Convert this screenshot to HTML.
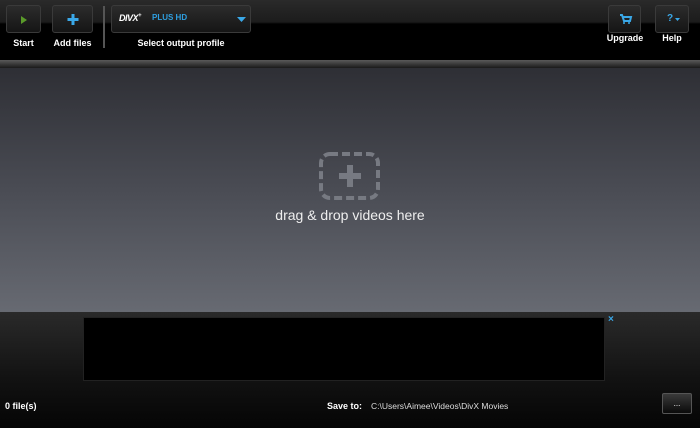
<!DOCTYPE html>
<html><head><style>
*{margin:0;padding:0;box-sizing:border-box}
body{width:700px;height:428px;overflow:hidden;background:#000;font-family:"Liberation Sans",sans-serif;position:relative}
.top{position:absolute;left:0;top:0;width:700px;height:60px;background:linear-gradient(#2a2a2a 0,#1c1c1c 22px,#000 24px,#000 60px)}
.sep{position:absolute;left:0;top:60px;width:700px;height:8px;background:linear-gradient(#5a5a5a,#333 60%,#1a1a1a)}
.main{position:absolute;left:0;top:68px;width:700px;height:244px;background:linear-gradient(#2e2f35,#4a4c54 50%,#676a72)}
.bot{position:absolute;left:0;top:312px;width:700px;height:116px;background:linear-gradient(#2a2a2a,#111 60%,#050505)}
.btn{position:absolute;top:5px;height:28px;border:1px solid #3a3a3a;border-radius:3px;background:linear-gradient(#2c2c2c,#151515)}
.lbl{position:absolute;color:#fff;font-size:9px;font-weight:bold;text-align:center}
</style></head><body>
<div class="top"></div>
<div class="btn" style="left:6px;width:35px"><svg width="35" height="28"><polygon points="14,10 14,18 20,14" fill="#5a9a2a"/></svg></div>
<div class="btn" style="left:52px;width:41px"><svg width="41" height="28"><rect x="18.5" y="8" width="3" height="11" fill="#3aa8e8"/><rect x="14.5" y="12" width="11" height="3" fill="#3aa8e8"/></svg></div>
<div style="position:absolute;left:103px;top:6px;width:2px;height:42px;background:#555"></div>
<div class="btn" style="left:111px;width:140px">
<span style="position:absolute;left:7px;top:7px;color:#fff;font-size:9px;font-weight:bold;font-style:italic;letter-spacing:-0.5px">DIVX<sup style="font-size:6px">+</sup></span>
<span style="position:absolute;left:40px;top:7px;color:#2e9fe0;font-size:8px;font-weight:bold">PLUS HD</span>
<svg style="position:absolute;right:4px;top:11px" width="9" height="6"><polygon points="0,0 9,0 4.5,5" fill="#3aa8e8"/></svg></div>
<div class="btn" style="left:608px;width:33px"><svg width="33" height="28"><path d="M11 9h2l2 6h6l1-4h-8" stroke="#3aa8e8" stroke-width="2" fill="none"/><circle cx="15" cy="17" r="1" fill="#3aa8e8"/><circle cx="20" cy="17" r="1" fill="#3aa8e8"/></svg></div>
<div class="btn" style="left:655px;width:34px"><span style="position:absolute;left:11px;top:7px;color:#3aa8e8;font-size:10px;font-weight:bold">?</span><svg style="position:absolute;left:19px;top:12px" width="5" height="4"><polygon points="0,0 5,0 2.5,3" fill="#3aa8e8"/></svg></div>
<div class="lbl" style="left:6px;top:38px;width:35px">Start</div>
<div class="lbl" style="left:50px;top:38px;width:45px">Add files</div>
<div class="lbl" style="left:111px;top:38px;width:140px">Select output profile</div>
<div class="lbl" style="left:600px;top:33px;width:50px">Upgrade</div>
<div class="lbl" style="left:655px;top:33px;width:34px">Help</div>
<div class="sep"></div>
<div class="main"></div>
<svg style="position:absolute;left:318px;top:151px" width="64" height="50"><rect x="3" y="3" width="57" height="44" rx="9" fill="none" stroke="#777a82" stroke-width="4" stroke-dasharray="8 4"/><rect x="29" y="14" width="6" height="22" fill="#777a82"/><rect x="21" y="22" width="22" height="6" fill="#777a82"/></svg>
<div style="position:absolute;left:250px;top:207px;width:200px;text-align:center;color:#eee;font-size:14px">drag &amp; drop videos here</div>
<div class="bot"></div>
<div style="position:absolute;left:83px;top:317px;width:522px;height:64px;background:#000;border:1px solid #222"></div>
<div style="position:absolute;left:608px;top:314px;color:#3aa8e8;font-size:10px;font-weight:bold">×</div>
<div style="position:absolute;left:5px;top:401px;color:#fff;font-size:9px;font-weight:bold">0 file(s)</div>
<div style="position:absolute;left:327px;top:401px;color:#fff;font-size:9px;font-weight:bold">Save to:</div>
<div style="position:absolute;left:371px;top:401px;color:#ddd;font-size:8.5px">C:\Users\Aimee\Videos\DivX Movies</div>
<div style="position:absolute;left:662px;top:393px;width:30px;height:21px;border:1px solid #555;border-radius:2px;background:linear-gradient(#3a3a3a,#0a0a0a);color:#fff;font-size:8px;text-align:center;line-height:19px">...</div>
</body></html>
